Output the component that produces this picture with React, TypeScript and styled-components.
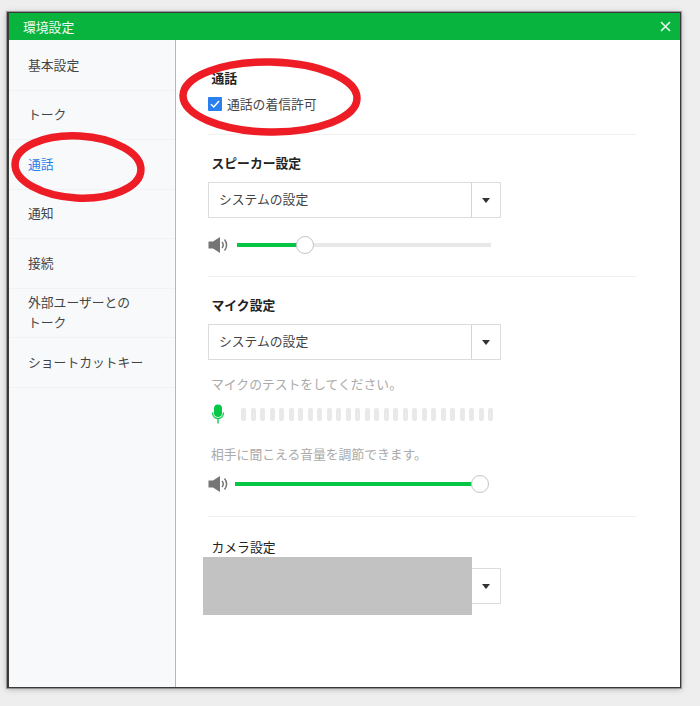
import React from 'react'
import styled, { createGlobalStyle } from 'styled-components'

const navItems = [['基本設定'], ['トーク'], ['通話'], ['通知'], ['接続'], ['外部ユーザーとの', 'トーク'], ['ショートカットキー']]

const GlobalStyles = createGlobalStyle`
    html, body {
        margin: 0;
        padding: 0;
        height: 706px;
        overflow: hidden;
        background: #eeeeee;
        font-family: "Noto Sans CJK JP", "Liberation Sans", sans-serif;
    }
`

const Page = styled.div`
    position: relative;
    width: 700px;
    height: 706px;
    padding: 12px 0 0 7px;
    box-sizing: border-box;
`
const Window = styled.div`
    width: 674px;
    height: 676px;
    box-sizing: border-box;
    display: flex;
    flex-direction: column;
    background: #fff;
    border: 1px solid #3a3a3a;
    border-left-width: 2px;
    border-right-width: 1px;
    box-shadow: 0 0 0 1px rgba(100, 100, 100, 0.55), 0 1px 6px rgba(0, 0, 0, 0.3);
`
const TitleBar = styled.div`
    height: 27px;
    flex: none;
    display: flex;
    align-items: center;
    justify-content: space-between;
    padding: 0 9px 0 14px;
    background: #08b33e;
    color: #f2fbf4;
    font-size: 12.8px;
`
const Body = styled.div`
    flex: 1;
    display: flex;
`
const Sidebar = styled.nav`
    width: 167px;
    flex: none;
    box-sizing: border-box;
    padding-top: 1px;
    background: #f8f9fb;
    border-right: 1px solid #b5b7ba;
`
const NavItem = styled.div<{ $active?: boolean }>`
    height: 49.5px;
    box-sizing: border-box;
    display: flex;
    flex-direction: column;
    justify-content: center;
    padding: 0 0 1px 19px;
    border-bottom: 1px solid #f1f2f4;
    color: ${(p) => (p.$active ? '#2a7fe8' : '#444')};
    font-size: 12.8px;
    line-height: 20px;
`
const Content = styled.main`
    flex: 1;
    padding: 29px 44px 0 32px;
`
const Section = styled.section<{ $height: number; $pad?: number }>`
    height: ${(p) => p.$height}px;
    box-sizing: border-box;
    padding-top: ${(p) => p.$pad ?? 0}px;
    border-bottom: 1px solid #f1f1f1;
`
const PlainSection = styled.section`
    padding-top: 21px;
`
const Heading = styled.h3<{ $weight?: number }>`
    margin: 0;
    padding-left: 3.5px;
    font-size: 12.8px;
    line-height: 18px;
    font-weight: ${(p) => p.$weight ?? 700};
    color: #222;
`
const CheckRow = styled.label`
    display: flex;
    align-items: center;
    gap: 5px;
    margin-top: 8px;
    font-size: 12.8px;
    line-height: 18px;
    color: #444;
`
const CheckBox = styled.span`
    width: 14px;
    height: 14px;
    border-radius: 1px;
    background: #2a80ee;
    display: flex;
    align-items: center;
    justify-content: center;
`
const Select = styled.div<{ $top: number }>`
    width: 293px;
    height: 36px;
    margin-top: ${(p) => p.$top}px;
    box-sizing: border-box;
    display: flex;
    border: 1px solid #dcdcdc;
    background: #fff;
`
const SelectLabel = styled.div`
    flex: 1;
    padding-left: 10px;
    line-height: 32px;
    font-size: 12.8px;
    color: #444;
`
const SelectArrow = styled.div`
    width: 28px;
    display: flex;
    align-items: center;
    justify-content: center;
    border-left: 1px solid #d4d4d4;
    &::after {
        content: '';
        border-left: 4.5px solid transparent;
        border-right: 4.5px solid transparent;
        border-top: 5px solid #333;
    }
`
const SliderRow = styled.div<{ $top: number; $gap: number }>`
    display: flex;
    align-items: center;
    gap: ${(p) => p.$gap}px;
    height: 18px;
    margin-top: ${(p) => p.$top}px;
`
const Track = styled.div<{ $width: number }>`
    position: relative;
    width: ${(p) => p.$width}px;
    height: 4px;
    background: #e8e8e8;
`
const TrackFill = styled.div`
    height: 100%;
    background: #06c745;
`
const Knob = styled.div`
    position: absolute;
    top: -7px;
    width: 18px;
    height: 18px;
    margin-left: -9px;
    box-sizing: border-box;
    border-radius: 50%;
    border: 1px solid #c4c4c4;
    background: #fff;
`
const Hint = styled.p<{ $top: number }>`
    margin: ${(p) => p.$top}px 0 0;
    padding-left: 3px;
    font-size: 12.8px;
    line-height: 18px;
    color: #aaa;
`
const MeterRow = styled.div`
    display: flex;
    align-items: center;
    gap: 16px;
    height: 20px;
    margin-top: 11px;
    padding-left: 3px;
`
const Meter = styled.div`
    display: flex;
    gap: 4.5px;
`
const MeterBar = styled.span`
    width: 5px;
    height: 13px;
    border-radius: 2px;
    background: #e9e9e9;
`
const Redaction = styled.div`
    position: absolute;
    left: 203px;
    top: 557px;
    width: 269px;
    height: 58px;
    background: #c2c2c2;
`
const Annotations = styled.svg`
    position: absolute;
    left: 0;
    top: 0;
    pointer-events: none;
`

const Speaker: React.FC = () => (
    <svg width="21" height="18" viewBox="0 0 21 18">
        <path d="M0.500 5.500h4.500l7-4.500v16l-7-4.500H0.500z" fill="#757575" />
        <path d="M14 6c1.500 1.800 1.500 4.200 0 6M16.500 3.500c2.800 3.200 2.800 7.800 0 11" fill="none" stroke="#757575" strokeWidth="1.500" />
    </svg>
)

const Mic: React.FC = () => (
    <svg width="14" height="20" viewBox="0 0 14 20">
        <rect x="3" y="0.500" width="8" height="12.500" rx="4" fill="#06c745" />
        <path d="M1.500 8.500c0 3.500 2.300 6 5.500 6s5.500-2.500 5.500-6M7 14.500V19.500" fill="none" stroke="#06c745" strokeWidth="1.300" />
    </svg>
)

const Slider: React.FC<{ width: number; value: number; top: number; gap: number }> = ({ width, value, top, gap }) => (
    <SliderRow $top={top} $gap={gap}>
        <Speaker />
        <Track $width={width}>
            <TrackFill style={{ width: value }} />
            <Knob style={{ left: value }} />
        </Track>
    </SliderRow>
)

export default function App() {
    return (
        <Page>
            <GlobalStyles />
            <Window>
                <TitleBar>
                    環境設定
                    <svg width="11" height="11" viewBox="0 0 11 11">
                        <path d="M1 1l9 9M10 1l-9 9" stroke="#e9f8ee" strokeWidth="1.600" />
                    </svg>
                </TitleBar>
                <Body>
                    <Sidebar>
                        {navItems.map((lines) => (
                            <NavItem key={lines[0]} $active={lines[0] === '通話'}>
                                {lines.map((line) => <span key={line}>{line}</span>)}
                            </NavItem>
                        ))}
                    </Sidebar>
                    <Content>
                        <Section $height={66}>
                            <Heading>通話</Heading>
                            <CheckRow>
                                <CheckBox>
                                    <svg width="10" height="10" viewBox="0 0 10 10">
                                        <path d="M1 5.200l2.800 2.800L9 2" fill="none" stroke="#fff" strokeWidth="1.500" />
                                    </svg>
                                </CheckBox>
                                通話の着信許可
                            </CheckRow>
                        </Section>
                        <Section $height={142} $pad={19}>
                            <Heading>スピーカー設定</Heading>
                            <Select $top={10}>
                                <SelectLabel>システムの設定</SelectLabel>
                                <SelectArrow />
                            </Select>
                            <Slider width={254} value={68} top={18} gap={8} />
                        </Section>
                        <Section $height={240} $pad={19}>
                            <Heading>マイク設定</Heading>
                            <Select $top={10}>
                                <SelectLabel>システムの設定</SelectLabel>
                                <SelectArrow />
                            </Select>
                            <Hint $top={15}>マイクのテストをしてください。</Hint>
                            <MeterRow>
                                <Mic />
                                <Meter>
                                    {Array.from({ length: 27 }, (_, i) => <MeterBar key={i} />)}
                                </Meter>
                            </MeterRow>
                            <Hint $top={21}>相手に聞こえる音量を調節できます。</Hint>
                            <Slider width={245} value={245} top={12} gap={6} />
                        </Section>
                        <PlainSection>
                            <Heading $weight={400}>カメラ設定</Heading>
                            <Select $top={12}>
                                <SelectLabel />
                                <SelectArrow />
                            </Select>
                        </PlainSection>
                    </Content>
                </Body>
            </Window>
            <Redaction />
            <Annotations width="700" height="706" viewBox="0 0 700 706">
                <ellipse cx="270" cy="97" rx="87" ry="35" fill="none" stroke="#ee1c25" strokeWidth="7.500" transform="rotate(1 270 97)" />
                <ellipse cx="78" cy="167" rx="63" ry="31" fill="none" stroke="#ee1c25" strokeWidth="7.500" transform="rotate(3 78 167)" />
            </Annotations>
        </Page>
    )
}
